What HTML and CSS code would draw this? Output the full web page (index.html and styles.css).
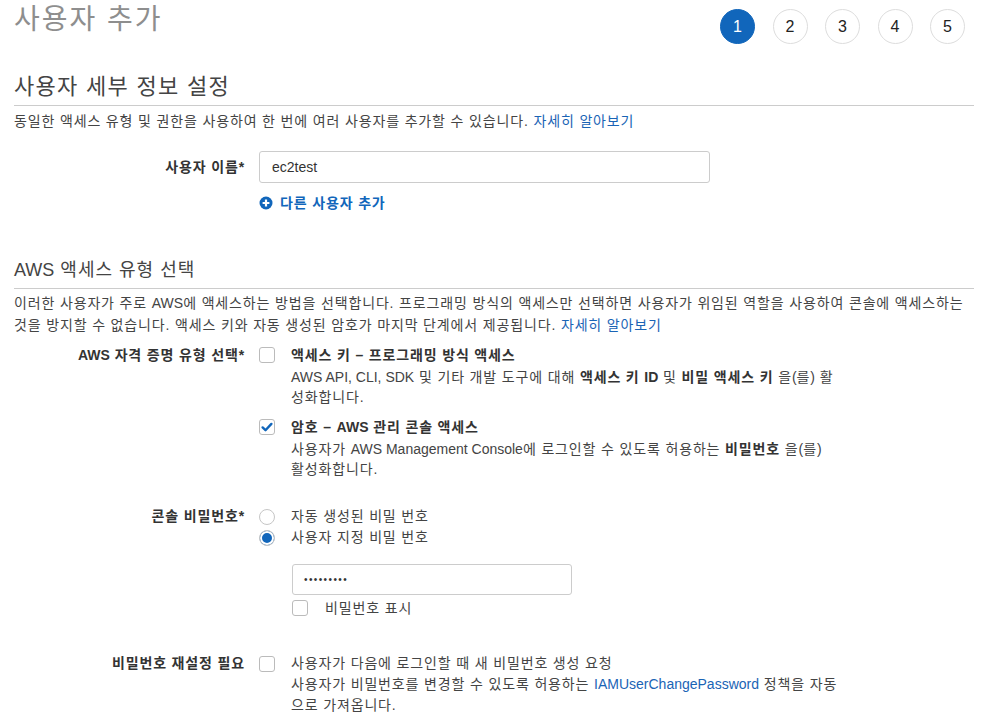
FILE: index.html
```html
<!DOCTYPE html>
<html lang="ko">
<head>
<meta charset="utf-8">
<title>사용자 추가</title>
<link rel="stylesheet" href="styles.css">
</head>
<body>
<div class="page">
  <header class="top">
    <h1 class="title">사용자 추가</h1>
    <ol class="steps">
      <li class="step step-active">1</li>
      <li class="step">2</li>
      <li class="step">3</li>
      <li class="step">4</li>
      <li class="step">5</li>
    </ol>
  </header>

  <section class="sec">
    <h2 class="sec-title">사용자 세부 정보 설정</h2>
    <p class="desc">동일한 액세스 유형 및 권한을 사용하여 한 번에 여러 사용자를 추가할 수 있습니다. <a class="link" href="#">자세히 알아보기</a></p>
    <div class="row row-user">
      <div class="label label-input">사용자 이름*</div>
      <div class="ctrl">
        <div class="input input-user"><span class="en">ec2test</span></div>
        <a class="add-user" href="#"><svg class="plus" viewBox="0 0 14 14" width="14" height="14"><circle cx="7" cy="7" r="6.5" fill="#1166bb"/><path d="M7 3.6v6.8M3.6 7h6.8" stroke="#fff" stroke-width="2.2"/></svg>다른 사용자 추가</a>
      </div>
    </div>
  </section>

  <section class="sec sec2">
    <h2 class="sec-title"><span class="en">AWS</span> 액세스 유형 선택</h2>
    <p class="desc desc2">이러한 사용자가 주로 <span class="en">AWS</span>에 액세스하는 방법을 선택합니다. 프로그래밍 방식의 액세스만 선택하면 사용자가 위임된 역할을 사용하여 콘솔에 액세스하는<br>것을 방지할 수 없습니다. 액세스 키와 자동 생성된 암호가 마지막 단계에서 제공됩니다. <a class="link" href="#">자세히 알아보기</a></p>

    <div class="row row-cred">
      <div class="label"><span class="en">AWS</span> 자격 증명 유형 선택*</div>
      <div class="ctrl">
        <div class="opt">
          <span class="box"></span>
          <div class="opt-body">
            <div class="opt-title">액세스 키 – 프로그래밍 방식 액세스</div>
            <div class="opt-desc"><span class="en">AWS API, CLI, SDK</span> 및 기타 개발 도구에 대해 <b>액세스 키 <span class="en">ID</span></b> 및 <b>비밀 액세스 키</b> 을<span class="en">(</span>를<span class="en">)</span> 활<br>성화합니다.</div>
          </div>
        </div>
        <div class="opt opt2">
          <span class="box box-checked"><svg viewBox="0 0 16 16" width="16" height="16"><path d="M3.6 8.4l2.9 2.8 5.9-6.3" fill="none" stroke="#1166bb" stroke-width="2.4" stroke-linecap="round" stroke-linejoin="round"/></svg></span>
          <div class="opt-body">
            <div class="opt-title">암호 – <span class="en">AWS</span> 관리 콘솔 액세스</div>
            <div class="opt-desc">사용자가 <span class="en">AWS Management Console</span>에 로그인할 수 있도록 허용하는 <b>비밀번호</b> 을<span class="en">(</span>를<span class="en">)</span><br>활성화합니다.</div>
          </div>
        </div>
      </div>
    </div>

    <div class="row row-pwd">
      <div class="label label-radio">콘솔 비밀번호*</div>
      <div class="ctrl">
        <div class="radio-line"><span class="radio"></span><span>자동 생성된 비밀 번호</span></div>
        <div class="radio-line"><span class="radio radio-on"></span><span>사용자 지정 비밀 번호</span></div>
        <div class="input input-pwd"><span class="dots">•••••••••</span></div>
        <div class="show-line"><span class="box box-small"></span><span>비밀번호 표시</span></div>
      </div>
    </div>

    <div class="row row-reset">
      <div class="label label-radio">비밀번호 재설정 필요</div>
      <div class="ctrl">
        <div class="opt opt-reset">
          <span class="box"></span>
          <div class="reset-text">사용자가 다음에 로그인할 때 새 비밀번호 생성 요청<br>사용자가 비밀번호를 변경할 수 있도록 허용하는 <a class="link en" href="#">IAMUserChangePassword</a> 정책을 자동<br>으로 가져옵니다.</div>
        </div>
      </div>
    </div>
  </section>
</div>
</body>
</html>
```

FILE: styles.css
```css
* { box-sizing: border-box; }

html, body {
  margin: 0;
  padding: 0;
  background: #fff;
}

body {
  font-family: "Liberation Sans", "Noto Sans CJK KR", sans-serif;
  font-size: 14px;
  letter-spacing: 0.85px;
  color: #444;
}

.en { letter-spacing: 0; }

.page {
  width: 983px;
  height: 726px;
  overflow: hidden;
  padding: 0 9px 0 14px;
}

.top {
  display: flex;
  justify-content: space-between;
  align-items: flex-start;
  height: 52px;
}

.title {
  margin: 0;
  font-size: 28px;
  line-height: 40px;
  font-weight: normal;
  letter-spacing: 2px;
  color: #8e8e8e;
}

.steps {
  list-style: none;
  margin: 9px 9px 0 0;
  padding: 0;
  display: flex;
  gap: 17.5px;
  letter-spacing: 0;
}

.step {
  width: 35px;
  height: 35px;
  border-radius: 50%;
  border: 1px solid #ddd;
  background: #fff;
  color: #222;
  font-size: 16px;
  display: flex;
  align-items: center;
  justify-content: center;
}

.step-active {
  background: #1166bb;
  border-color: #1166bb;
  color: #fff;
}

.sec-title {
  margin: 20px 0 0;
  font-size: 22px;
  line-height: 30px;
  font-weight: normal;
  letter-spacing: 1.3px;
  color: #444;
  padding-bottom: 3px;
  border-bottom: 1px solid #ccc;
}

.sec2 .sec-title {
  margin-top: 42px;
  font-size: 18px;
  letter-spacing: 1px;
  padding-bottom: 3px;
}

.desc {
  margin: 4px 0 0;
  line-height: 22px;
  white-space: nowrap;
}

.desc2 { margin-top: 3px; }

.link {
  color: #1a64b5;
  text-decoration: none;
}

.row {
  display: grid;
  grid-template-columns: 231px 1fr;
  column-gap: 14px;
}

.label {
  text-align: right;
  font-weight: bold;
  color: #333;
  line-height: 20px;
  white-space: nowrap;
}

.label-input { line-height: 32px; }
.label-radio { line-height: 21px; }

.row-user { margin-top: 19px; }

.input {
  height: 32px;
  border: 1px solid #ccc;
  border-radius: 3px;
  background: #fff;
  padding: 0 12px;
  display: flex;
  align-items: center;
  color: #333;
}

.input-user { width: 451px; }

.add-user {
  margin-top: 10px;
  display: flex;
  align-items: center;
  gap: 7px;
  line-height: 20px;
  font-weight: bold;
  color: #1166bb;
  text-decoration: none;
}

.plus { display: block; }

.row-cred { margin-top: 9px; }

.opt {
  display: flex;
  gap: 16px;
  line-height: 20px;
}

.opt2 { margin-top: 10px; }

.box {
  flex: none;
  width: 16px;
  height: 16px;
  margin-top: 2px;
  border: 1px solid #bbb;
  border-radius: 3px;
  background: #fff;
  display: block;
  position: relative;
}

.box svg {
  position: absolute;
  left: -1px;
  top: -1px;
}

.opt-title {
  font-weight: bold;
  color: #333;
}

.opt-desc {
  margin-top: 2px;
  white-space: nowrap;
}

.opt-desc b { color: #333; }

.row-pwd { margin-top: 27px; }

.radio-line {
  display: flex;
  gap: 16px;
  line-height: 21px;
}

.radio {
  flex: none;
  width: 16px;
  height: 16px;
  margin-top: 3px;
  border-radius: 50%;
  border: 1px solid #c6c6c6;
  background: #fff;
  display: block;
}

.radio-on {
  background: #1166bb;
  box-shadow: inset 0 0 0 2px #fff;
}

.input-pwd {
  width: 280px;
  height: 31px;
  margin: 16px 0 0 33px;
  padding: 0 11px;
  color: #333;
}

.dots {
  font-size: 10px;
  letter-spacing: 1.4px;
}

.show-line {
  margin: 5px 0 0 33px;
  display: flex;
  gap: 17px;
  line-height: 16px;
}

.box-small {
  width: 16px;
  height: 16px;
  margin-top: 0;
}

.row-reset { margin-top: 37px; }

.opt-reset {
  line-height: 21px;
}

.opt-reset .box { margin-top: 3px; }

.reset-text { white-space: nowrap; }
```
